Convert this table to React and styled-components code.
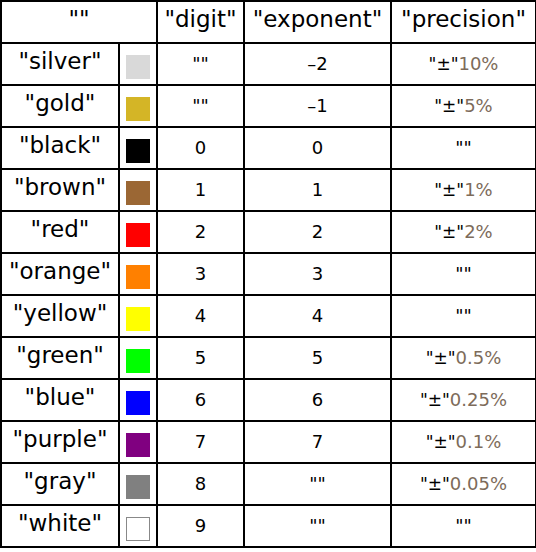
import React from 'react';
import styled, { createGlobalStyle } from 'styled-components';

const GlobalStyle = createGlobalStyle`
  body {
    margin: 0;
    background: #fff;
    font-family: "DejaVu Sans", sans-serif;
  }
`;

const Table = styled.table`
  border-collapse: collapse;
  table-layout: fixed;
  width: 535px;
  color: #000;
`;

const Cell = styled.td`
  border: 2px solid #000;
  height: ${(p) => (p.$big ? '34px' : '40px')};
  padding: 0 0 ${(p) => (p.$big ? '6px' : '0')};
  text-align: center;
  vertical-align: middle;
  font-size: ${(p) => (p.$big ? '23px' : '18px')};
  line-height: 1;
  white-space: nowrap;
`;

const Swatch = styled.span`
  display: inline-block;
  width: 24px;
  height: 24px;
  box-sizing: border-box;
  background: ${(p) => p.$color};
  border: ${(p) => (p.$outline ? '1px solid #888' : 'none')};
  vertical-align: middle;
  margin-top: 6px;
`;

const Plus = styled.span`
  font-size: 17px;
`;

const Percent = styled.span`
  color: #7d6b5a;
  font-size: 18px;
`;

const rows = [
  { name: 'silver', color: '#d9d9d9', digit: null, exp: '–2', prec: '10%' },
  { name: 'gold', color: '#d4b526', digit: null, exp: '–1', prec: '5%' },
  { name: 'black', color: '#000000', digit: '0', exp: '0', prec: null },
  { name: 'brown', color: '#9b6734', digit: '1', exp: '1', prec: '1%' },
  { name: 'red', color: '#ff0000', digit: '2', exp: '2', prec: '2%' },
  { name: 'orange', color: '#ff8000', digit: '3', exp: '3', prec: null },
  { name: 'yellow', color: '#ffff00', digit: '4', exp: '4', prec: null },
  { name: 'green', color: '#00ff00', digit: '5', exp: '5', prec: '0.5%' },
  { name: 'blue', color: '#0000ff', digit: '6', exp: '6', prec: '0.25%' },
  { name: 'purple', color: '#800080', digit: '7', exp: '7', prec: '0.1%' },
  { name: 'gray', color: '#808080', digit: '8', exp: null, prec: '0.05%' },
  { name: 'white', color: '#ffffff', digit: '9', exp: null, prec: null, outline: true },
];

const empty = '""';

export default function App() {
  return (
    <>
      <GlobalStyle />
      <Table>
        <colgroup>
          <col style={{ width: 118 }} />
          <col style={{ width: 38 }} />
          <col style={{ width: 87 }} />
          <col style={{ width: 147 }} />
          <col style={{ width: 145 }} />
        </colgroup>
        <tbody>
          <tr>
            <Cell $big colSpan={2}>{empty}</Cell>
            <Cell $big>"digit"</Cell>
            <Cell $big>"exponent"</Cell>
            <Cell $big>"precision"</Cell>
          </tr>
          {rows.map((r) => (
            <tr key={r.name}>
              <Cell $big>"{r.name}"</Cell>
              <Cell>
                <Swatch $color={r.color} $outline={r.outline} />
              </Cell>
              <Cell>{r.digit ?? empty}</Cell>
              <Cell>{r.exp ?? empty}</Cell>
              <Cell>
                {r.prec ? (
                  <>
                    <Plus>"±"</Plus>
                    <Percent>{r.prec}</Percent>
                  </>
                ) : (
                  empty
                )}
              </Cell>
            </tr>
          ))}
        </tbody>
      </Table>
    </>
  );
}
